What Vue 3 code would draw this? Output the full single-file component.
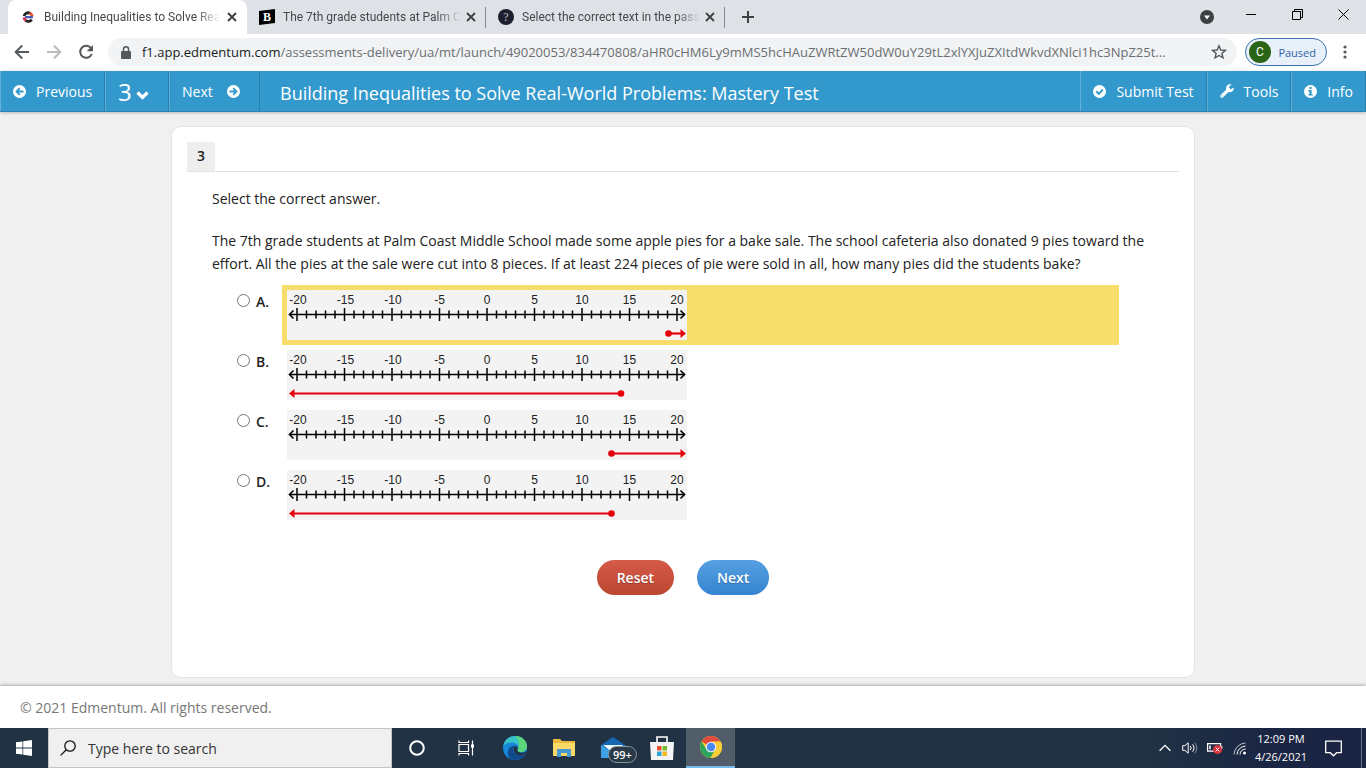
<script setup>
import { ref } from 'vue'

const tabs = [
  { title: 'Building Inequalities to Solve Rea', icon: 'edmentum', active: true },
  { title: 'The 7th grade students at Palm C', icon: 'brainly', active: false },
  { title: 'Select the correct text in the pass', icon: 'question', active: false },
]

const urlPath = ref('/assessments-delivery/ua/mt/launch/49020053/834470808/aHR0cHM6Ly9mMS5hcHAuZWRtZW50dW0uY29tL2xlYXJuZXItdWkvdXNlci1hc3NpZ25t...')
const search = ref('')
const answer = ref('')

const options = [
  { letter: 'A', from: 19, dir: 'right', highlighted: true },
  { letter: 'B', from: 14, dir: 'left', highlighted: false },
  { letter: 'C', from: 13, dir: 'right', highlighted: false },
  { letter: 'D', from: 13, dir: 'left', highlighted: false },
]

const at = (v) => 10 + (v + 20) * 9.5
const ticks = Array.from({ length: 41 }, (_, i) => i - 20)
const majors = ticks.filter((t) => t % 5 === 0)
</script>

<template>
  <div class="screen">
    <header class="tabstrip">
      <div class="tabs">
        <div v-for="tab in tabs" :key="tab.title" class="tab" :class="{ active: tab.active }">
          <svg v-if="tab.icon === 'edmentum'" class="favicon" width="16" height="16" viewBox="0 0 16 16">
            <path d="M4 7A4.300 4.300 0 0 1 10 4.200" fill="none" stroke="#222" stroke-width="2.800" />
            <path d="M9.500 4A4.300 4.300 0 0 1 12.200 7.500" fill="none" stroke="#e2522b" stroke-width="2.800" />
            <path d="M5 8.200h7.800" stroke="#3d4fb0" stroke-width="2.200" />
            <path d="M4 8.500A4.300 4.300 0 0 0 6.200 11.800" fill="none" stroke="#d4304a" stroke-width="2.800" />
            <path d="M5.800 11.700a4.300 4.300 0 0 0 5.900-1" fill="none" stroke="#222" stroke-width="2.800" />
          </svg>
          <svg v-else-if="tab.icon === 'brainly'" class="favicon" width="16" height="16" viewBox="0 0 16 16">
            <path d="M0 2L16 0v14L0 16z" fill="#000" />
            <text x="8" y="12" text-anchor="middle" class="fav-b">B</text>
          </svg>
          <svg v-else class="favicon" width="16" height="16" viewBox="0 0 16 16">
            <circle cx="8" cy="8" r="8" fill="#1c1f2e" />
            <text x="8" y="12" text-anchor="middle" class="fav-q">?</text>
          </svg>
          <span class="tab-title">{{ tab.title }}</span>
          <button class="tab-close" aria-label="Close tab">
            <svg width="10" height="10" viewBox="0 0 10 10"><path d="M1 1l8 8M9 1L1 9" stroke="#3c4043" stroke-width="1.8" /></svg>
          </button>
        </div>
        <button class="new-tab" aria-label="New tab">
          <svg width="12" height="12" viewBox="0 0 12 12"><path d="M6 0v12M0 6h12" stroke="#3c4043" stroke-width="2" /></svg>
        </button>
      </div>
      <div class="window-controls">
        <button aria-label="Search tabs">
          <svg width="14" height="14" viewBox="0 0 14 14"><circle cx="7" cy="7" r="7" fill="#3c4043" /><path d="M4 5.5h6L7 9.5z" fill="#fff" /></svg>
        </button>
        <button aria-label="Minimize">
          <svg width="10" height="10" viewBox="0 0 10 10"><path d="M0 5.5h10" stroke="#000" /></svg>
        </button>
        <button aria-label="Restore">
          <svg width="11" height="11" viewBox="0 0 11 11" fill="none" stroke="#000"><path d="M.5 2.5h8v8h-8z" /><path d="M2.500 2.500v-2h8v8h-2" /></svg>
        </button>
        <button aria-label="Close">
          <svg width="11" height="11" viewBox="0 0 11 11"><path d="M.5.5l10 10M10.500.5l-10 10" stroke="#000" /></svg>
        </button>
      </div>
    </header>

    <div class="toolbar">
      <button class="tool" aria-label="Back">
        <svg width="16" height="16" viewBox="0 0 16 16" fill="none" stroke="#54585c" stroke-width="2"><path d="M15 8H2M8.200 1.500L1.700 8l6.500 6.500" /></svg>
      </button>
      <button class="tool" aria-label="Forward">
        <svg width="16" height="16" viewBox="0 0 16 16" fill="none" stroke="#babcbe" stroke-width="2"><path d="M1 8h13M7.800 1.500L14.300 8l-6.500 6.500" /></svg>
      </button>
      <button class="tool" aria-label="Reload">
        <svg width="16" height="16" viewBox="0 0 16 16"><path d="M13 4.200A6 6 0 1 0 13.800 10" fill="none" stroke="#54585c" stroke-width="2" /><path d="M15 1v6.300H8.700z" fill="#54585c" /></svg>
      </button>
      <div class="omnibox">
        <svg class="lock" width="10" height="13" viewBox="0 0 10 13"><rect y="5" width="10" height="8" rx="1" fill="#54585c" /><path d="M2.500 5V3.300a2.500 2.500 0 0 1 5 0V5" fill="none" stroke="#54585c" stroke-width="1.500" /></svg>
        <label for="address" class="host">f1.app.edmentum.com</label>
        <input id="address" v-model="urlPath" class="address" type="text" />
        <button class="star" aria-label="Bookmark this tab">
          <svg width="16" height="16" viewBox="0 0 16 16"><path d="M8 1.800l1.800 4.200 4.600.4-3.500 3 1.100 4.500L8 11.500l-4 2.400 1.100-4.500-3.500-3 4.600-.4z" fill="none" stroke="#54585c" stroke-width="1.400" /></svg>
        </button>
      </div>
      <button class="profile"><span class="avatar">C</span>Paused</button>
      <button class="tool menu" aria-label="Menu">
        <svg width="4" height="14" viewBox="0 0 4 14" fill="#54585c"><circle cx="2" cy="2" r="1.600" /><circle cx="2" cy="7" r="1.600" /><circle cx="2" cy="12" r="1.600" /></svg>
      </button>
    </div>

    <nav class="navbar">
      <button class="nav-item prev">
        <svg width="13" height="13" viewBox="0 0 13 13"><circle cx="6.500" cy="6.500" r="6.500" fill="#fff" /><path d="M10.500 6.500H4M6.800 3.200L3.500 6.500l3.300 3.300" fill="none" stroke="#39c" stroke-width="1.900" /></svg>
        Previous
      </button>
      <button class="nav-item number">3
        <svg width="13" height="9" viewBox="0 0 13 9"><path d="M1.500 1.500l5 5 5-5" fill="none" stroke="#fff" stroke-width="3.200" /></svg>
      </button>
      <button class="nav-item next">Next
        <svg width="13" height="13" viewBox="0 0 13 13"><circle cx="6.500" cy="6.500" r="6.500" fill="#fff" /><path d="M2.500 6.500H9M6.200 3.200l3.300 3.300-3.300 3.300" fill="none" stroke="#39c" stroke-width="1.900" /></svg>
      </button>
      <h1>Building Inequalities to Solve Real-World Problems: Mastery Test</h1>
      <button class="nav-item">
        <svg width="13" height="13" viewBox="0 0 13 13"><circle cx="6.500" cy="6.500" r="6.500" fill="#fff" /><path d="M3.300 6.300l2.500 2.600 4-4.300" fill="none" stroke="#39c" stroke-width="2" /></svg>
        Submit Test
      </button>
      <button class="nav-item">
        <svg width="14" height="14" viewBox="0 0 14 14"><path d="M1.900 12.100L8.500 5.600" stroke="#fff" stroke-width="3.400" stroke-linecap="round" /><path d="M11.700.6L9.200 2.300v2l1.700.9 2.800-1.700c.5 2.500-1.300 4.700-3.700 4.700C7.600 8.200 6 6.500 6 4.300 6 1.500 8.800-.5 11.700.6z" fill="#fff" /><circle cx="2.100" cy="11.900" r=".7" fill="#39c" /></svg>
        Tools
      </button>
      <button class="nav-item">
        <svg width="13" height="13" viewBox="0 0 13 13"><circle cx="6.500" cy="6.500" r="6.500" fill="#fff" /><path d="M5.400 2h2.200v2H5.400zM4.500 5h3.100v4h1v1.500H4.500V9h.9V6.400h-.9z" fill="#39c" /></svg>
        Info
      </button>
    </nav>

    <main>
      <section class="card">
        <div class="card-head"><span class="badge">3</span></div>
        <div class="question">
          <p>Select the correct answer.</p>
          <p>The 7th grade students at Palm Coast Middle School made some apple pies for a bake sale. The school cafeteria also donated 9 pies toward the effort. All the pies at the sale were cut into 8 pieces. If at least 224 pieces of pie were sold in all, how many pies did the students bake?</p>
          <div class="options">
            <div v-for="o in options" :key="o.letter" class="option">
              <input :id="'opt-' + o.letter" v-model="answer" type="radio" name="answer" :value="o.letter" />
              <label class="letter" :for="'opt-' + o.letter">{{ o.letter }}.</label>
              <label class="plot" :class="{ highlighted: o.highlighted }" :for="'opt-' + o.letter">
                <svg width="400" height="50" viewBox="0 0 400 50">
                  <rect width="400" height="50" fill="#f3f3f3" />
                  <text v-for="m in majors" :key="m" :x="at(m) + (m < -5 ? 1 : 0)" y="14" text-anchor="middle" class="tick-label">{{ m }}</text>
                  <path d="M3 24.500h395" stroke="#000" stroke-width="1.600" />
                  <path d="M6.500 20.500l-4 4 4 4M393.500 20.500l4 4-4 4" fill="none" stroke="#000" stroke-width="1.600" />
                  <line v-for="t in ticks" :key="t" :x1="at(t)" :x2="at(t)" :y1="t % 5 ? 20.500 : 18" :y2="t % 5 ? 28.500 : 31" stroke="#000" stroke-width="1.500" />
                  <g fill="#e6000c" stroke="#e6000c">
                    <line :x1="at(o.from) + 1" :x2="o.dir === 'left' ? 5 : 395" y1="43.500" y2="43.500" stroke-width="2.200" />
                    <circle :cx="at(o.from) + 1" cy="43.500" r="3.300" stroke="none" />
                    <path v-if="o.dir === 'left'" d="M2 43.500l5.500-4.500v9z" stroke="none" />
                    <path v-else d="M399 43.500l-5.500-4.500v9z" stroke="none" />
                  </g>
                </svg>
              </label>
            </div>
          </div>
        </div>
        <div class="actions">
          <button class="pill reset">Reset</button>
          <button class="pill go">Next</button>
        </div>
      </section>
    </main>

    <footer class="copyright">© 2021 Edmentum. All rights reserved.</footer>

    <div class="taskbar">
      <button class="start" aria-label="Start">
        <svg width="16" height="16" viewBox="0 0 16 16" fill="#fff"><path d="M0 2.300l6.500-.9v6.200H0zM7.200 1.300L16 0v7.600H7.200zM0 8.400h6.500v6.200L0 13.700zM7.200 8.400H16V16l-8.800-1.300z" /></svg>
      </button>
      <label class="search">
        <svg width="16" height="16" viewBox="0 0 16 16" fill="none" stroke="#111" stroke-width="1.300"><circle cx="10" cy="6" r="5.200" /><path d="M6.300 9.700L.6 15.400" /></svg>
        <input v-model="search" type="text" placeholder="Type here to search" aria-label="Type here to search" />
      </label>
      <div class="apps">
        <button aria-label="Cortana">
          <svg width="18" height="18" viewBox="0 0 18 18"><circle cx="9" cy="9" r="6.800" fill="none" stroke="#fff" stroke-width="2" /></svg>
        </button>
        <button aria-label="Task View">
          <svg width="18" height="18" viewBox="0 0 18 18" fill="none" stroke="#fff" stroke-width="1.200"><path d="M2 5.500h9.500v7H2zM2 1.500v2h9.500v-2M2 16.500v-2h9.500v2M15.500 1.500v15" /><path d="M14 5.500h3v3h-3z" fill="#fff" stroke="none" /></svg>
        </button>
        <button aria-label="Edge">
          <svg width="24" height="24" viewBox="0 0 24 24">
            <circle cx="12" cy="12" r="12" fill="#1687d9" />
            <path d="M.2 10.500C1 4.500 5.800 0 12 0c7 0 12 5 12 10.500 0 3.500-2.800 5.500-6 5.500-2.500 0-3.700-1-3.500-1.800.2-.6 1-1 1-2.700 0-2.300-2.500-5-7-5C4.500 6.500 1.500 8.500.2 10.500z" fill="#37c3c8" />
            <path d="M12 0c7 0 12 5 12 10.500 0 3.500-2.800 5.500-6 5.500-2.500 0-3.700-1-3.500-1.800.2-.6 1-1 1-2.700C17 8 16 3 12 0z" fill="#5bd67a" />
            <path d="M8.800 23.500C4 21 3.500 14 7.500 11c1.500-1 3.500-1.500 5-1-3 .8-3 5 0 7.500 2.500 2 6.500 2 9.700.5-2.500 4.800-8 7-13.400 5.500z" fill="#114a8b" />
            <path d="M14.200 14c0 1.500 1.800 2.800 4.300 2.800 2 0 3.500-.6 4.700-1.800l-1 3c-3.500 2-8 1.500-10-.7-2-2.300-2-6 .5-7.200 2 .3 2.500 2.300 1.500 3.900z" fill="#203244" />
          </svg>
        </button>
        <button aria-label="File Explorer">
          <svg width="22" height="20" viewBox="0 0 22 20"><path d="M0 1h7l2 2h13v15H0z" fill="#e9b83d" /><path d="M0 5h22v13H0z" fill="#ffd968" /><path d="M4 19v-8h14v8h-4v-4H8v4z" fill="#4698d0" /></svg>
        </button>
        <button class="mail" aria-label="Mail">
          <svg width="24" height="24" viewBox="0 0 24 24"><path d="M0 9l12-8 12 8v13H0z" fill="#1467b3" /><path d="M2 9h20l-10 8z" fill="#eef5fb" /><path d="M0 9l12 8 12-8v13H0z" fill="#3ba2e5" /></svg>
          <span class="count">99+</span>
        </button>
        <button aria-label="Microsoft Store">
          <svg width="24" height="24" viewBox="0 0 24 24"><path d="M7 6V1h10v5" fill="none" stroke="#fff" stroke-width="1.600" /><path d="M0 6h24l-1 18H1z" fill="#f4f4f4" /><path d="M7 10h4.500v4.500H7z" fill="#e8502e" /><path d="M12.500 10H17v4.500h-4.500z" fill="#7ab929" /><path d="M7 15.500h4.500V20H7z" fill="#2ba4df" /><path d="M12.500 15.500H17V20h-4.500z" fill="#f5b71c" /></svg>
        </button>
        <button class="running" aria-label="Chrome">
          <svg width="22" height="22" viewBox="0 0 22 22"><circle cx="11" cy="11" r="11" fill="#f9cd37" /><path d="M11 11L1.500 5.500A11 11 0 0 1 20.500 5.500L11 6z" fill="#df4c3c" /><path d="M1.500 5.500a11 11 0 0 0 9 16.500L15 13.500l-8.500 0z" fill="#2da55c" /><path d="M11 5.500h9.500A11 11 0 0 1 10.500 22L15.800 14z" fill="#f9cd37" /><circle cx="11" cy="11" r="5.300" fill="#f4f4f4" /><circle cx="11" cy="11" r="4.200" fill="#4a87ee" /></svg>
        </button>
      </div>
      <div class="tray">
        <button aria-label="Show hidden icons"><svg width="12" height="8" viewBox="0 0 12 8"><path d="M.6 6.800L6 1.400l5.400 5.400" fill="none" stroke="#fff" stroke-width="1.300" /></svg></button>
        <button aria-label="Volume"><svg width="16" height="14" viewBox="0 0 16 14" fill="none" stroke="#fff"><path d="M.7 4.700h2.200L6.200 1.800v10.400L2.900 9.300H.7z" /><path d="M8.300 5a3 3 0 0 1 0 4" /><path d="M10.500 3.300a5.300 5.300 0 0 1 0 7.400" /><path d="M12.800 1.700a8 8 0 0 1 0 10.600" opacity=".45" /></svg></button>
        <button aria-label="Battery"><svg width="16" height="14" viewBox="0 0 16 14"><path d="M.6 2.600h13v7.500H.6z" fill="none" stroke="#fff" stroke-width="1.200" /><path d="M2.300 4.500h1.500v3.700H2.300zM14 5h1.300v3H14z" fill="#fff" /><circle cx="10.500" cy="8.500" r="4.500" fill="#d5343e" /><path d="M8.700 6.700l3.600 3.600M12.300 6.700l-3.600 3.600" stroke="#fff" /></svg></button>
        <button aria-label="Network"><svg width="14" height="14" viewBox="0 0 14 14" fill="none" stroke="#fff"><path d="M1 13.500A12 12 0 0 1 12.500 2" opacity=".7" /><path d="M4 13.500A9 9 0 0 1 12.500 5" /><path d="M7 13.500A6 6 0 0 1 12.500 8" /><circle cx="11.500" cy="12" r="1.500" fill="#fff" stroke="none" /></svg></button>
        <time datetime="2021-04-26T12:09">12:09 PM<br />4/26/2021</time>
        <button class="notify" aria-label="Notifications"><svg width="17" height="17" viewBox="0 0 17 17"><path d="M.7 1.200h15.600v11.500h-4.600L8.500 15.800l-3.200-3.100H.7z" fill="none" stroke="#fff" stroke-width="1.300" /></svg></button>
      </div>
    </div>
  </div>
</template>

<style>
body {
  background: #f0f0f0;
}
</style>

<style scoped>
* {
  box-sizing: border-box;
}
.screen {
  min-height: 100vh;
  display: flex;
  flex-direction: column;
  font-family: "Open Sans", "Noto Sans", sans-serif;
  font-size: 14px;
  color: #222;
}
button {
  border: 0;
  padding: 0;
  background: none;
  font: inherit;
  color: inherit;
  display: flex;
  align-items: center;
  justify-content: center;
}
input {
  font: inherit;
}
svg {
  display: block;
  flex: none;
}

.tabstrip {
  height: 34px;
  display: flex;
  justify-content: space-between;
  background: #dee1e6;
  font-family: Roboto, "Open Sans", sans-serif;
  font-size: 12px;
  color: #45494d;
}
.tabs {
  display: flex;
  padding-left: 8px;
}
.tab {
  width: 239px;
  display: flex;
  align-items: center;
  padding: 0 8px 0 12px;
  border-right: 1px solid #85888c;
  border-image: linear-gradient(transparent 8px, #85888c 8px, #85888c 27px, transparent 27px) 1;
}
.tab.active {
  background: #fff;
  border: 0;
  border-radius: 8px 8px 0 0;
}
.favicon {
  margin-right: 8px;
}
.fav-b {
  font: bold 12px "Liberation Serif", serif;
  fill: #fff;
}
.fav-q {
  font: 12px "Liberation Serif", serif;
  fill: #c5c7cf;
}
.tab-title {
  flex: 1;
  white-space: nowrap;
  mask-image: linear-gradient(90deg, #000 calc(100% - 24px), transparent);
}
.tab-close {
  width: 16px;
  height: 16px;
  margin-left: 4px;
}
.new-tab {
  width: 46px;
}
.window-controls {
  display: flex;
}
.window-controls button {
  width: 46px;
  height: 28px;
}
.window-controls button:first-child {
  width: 42px;
  height: 34px;
}

.toolbar {
  height: 37px;
  display: flex;
  align-items: center;
  padding: 0 11px 1px 6px;
  background: #fff;
}
.tool {
  width: 32px;
  height: 28px;
}
.omnibox {
  flex: 1;
  min-width: 0;
  height: 28px;
  margin-left: 6px;
  padding: 0 10px 0 13px;
  display: flex;
  align-items: center;
  border-radius: 14px;
  background: #f1f3f4;
  font-size: 13px;
}
.lock {
  margin-right: 11px;
}
.host {
  color: #202124;
}
.address {
  flex: 1;
  min-width: 0;
  padding: 0;
  border: 0;
  background: none;
  color: #6b6f73;
}
.star {
  margin-left: 16px;
}
.profile {
  width: 82px;
  height: 28px;
  margin-left: 8px;
  padding: 0 10px 0 3px;
  justify-content: space-between;
  border: 1px solid #3a72b5;
  border-radius: 14px;
  background: #e8f0fa;
  color: #3262a8;
  font-size: 11px;
}
.avatar {
  width: 22px;
  height: 22px;
  line-height: 22px;
  border-radius: 50%;
  background: #2c6417;
  color: #fff;
  font-family: Roboto, sans-serif;
  font-size: 12px;
}
.menu {
  width: 20px;
  margin-left: 8px;
}

.navbar {
  height: 41px;
  display: flex;
  background: #39c;
  border-bottom: 1px solid #2d84b3;
  box-shadow: 0 1px 3px #bbb;
  color: #fff;
  position: relative;
}
.nav-item {
  justify-content: flex-start;
  gap: 10px;
  padding: 0 12px;
  border-left: 1px solid #5fb0da;
  border-right: 1px solid #2580ad;
}
.prev {
  width: 105px;
}
.number {
  width: 64px;
  gap: 4px;
  font-size: 24px;
}
.number svg {
  margin-top: 8px;
}
.next {
  width: 91px;
  gap: 14px;
}
h1 {
  flex: 1;
  margin: 0;
  padding-left: 20px;
  font-size: 18px;
  font-weight: 400;
  line-height: 44px;
  white-space: nowrap;
}

main {
  flex: 1;
  display: flex;
  justify-content: center;
  padding: 14px 20px 8px;
  background: #f0f0f0;
}
.card {
  width: 100%;
  max-width: 1024px;
  padding: 15px;
  border: 1px solid #e4e4e4;
  border-radius: 10px;
  background: #fff;
}
.card-head {
  display: flex;
  border-bottom: 1px solid #e2e2e2;
}
.badge {
  width: 28px;
  height: 29px;
  line-height: 28px;
  text-align: center;
  font-weight: 600;
  background: #eee;
}
.question {
  padding: 15px 25px 0;
  line-height: 23px;
}
p {
  margin: 0 0 19px;
}
.options {
  margin-top: -9px;
  padding: 0 35px 0 25px;
}
.option {
  display: flex;
  align-items: flex-start;
}
.option input {
  width: 13px;
  height: 13px;
  margin: 9px 6px 0 0;
}
.letter {
  min-width: 14px;
  margin: 5px 12px 0 0;
  font-weight: 600;
}
.plot {
  flex: 1;
  padding: 5px;
}
.highlighted {
  background: #f7dd6b;
}
.tick-label {
  font: 12px "Liberation Sans", Arial, sans-serif;
  fill: #222;
}
.actions {
  display: flex;
  justify-content: center;
  gap: 23px;
  margin-top: 35px;
}
.pill {
  height: 35px;
  padding: 0 20px;
  border-radius: 18px;
  color: #fff;
  font-weight: 600;
  text-shadow: 0 1px 1px #0004;
}
.reset {
  background: linear-gradient(#d55a48, #bb4730);
}
.go {
  background: linear-gradient(#56a0e0, #3584d2);
}

.copyright {
  height: 42px;
  padding-left: 20px;
  line-height: 43px;
  background: #fff;
  color: #777;
  box-shadow: 0 -1px 3px #aaa;
  position: relative;
}

.taskbar {
  height: 40px;
  display: flex;
  background: linear-gradient(90deg, #203244 0%, #203244 84%, #1a2443 94%);
  color: #fff;
  position: relative;
}
.start {
  width: 48px;
}
.search {
  width: 344px;
  display: flex;
  align-items: center;
  padding-left: 11px;
  gap: 12px;
  border: 1px solid #c4c4c4;
  background: #f0f0f0;
}
.search input {
  flex: 1;
  min-width: 0;
  padding: 0;
  border: 0;
  background: none;
}
.search input::placeholder {
  color: #333;
}
.apps {
  display: flex;
}
.apps button {
  width: 49px;
}
.mail {
  position: relative;
}
.count {
  position: absolute;
  left: 20px;
  top: 18px;
  padding: 0 4px;
  border: 1px solid #8a939c;
  border-radius: 9px;
  background: #2b3a48;
  font-size: 11px;
  font-weight: 600;
  line-height: 15px;
}
.running {
  background: #515d69;
  border-bottom: 2px solid #76b9ed;
}
.tray {
  margin-left: auto;
  margin-right: 4px;
  display: flex;
  align-items: center;
  border-right: 1px solid #68708a;
}
.tray button {
  width: 25px;
}
time {
  width: 58px;
  font-size: 11px;
  line-height: 18px;
  text-align: center;
}
.tray .notify {
  width: 46px;
  margin-right: 5px;
}
</style>
